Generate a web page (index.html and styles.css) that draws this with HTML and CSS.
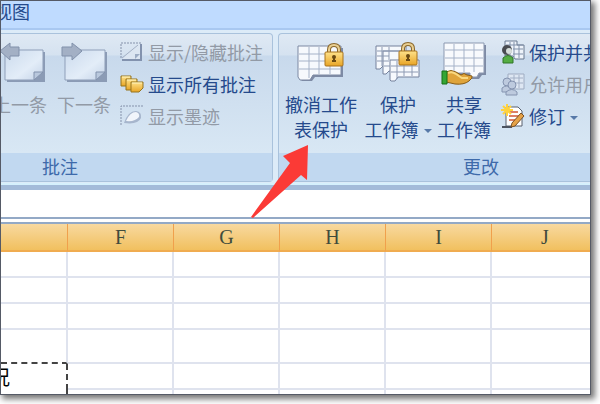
FILE: index.html
```html
<!DOCTYPE html>
<html lang="zh-CN">
<head>
  <meta charset="UTF-8">
  <meta name="viewport" content="width=device-width, initial-scale=1.0">
  <title>撤消工作表保护</title>
  <link rel="stylesheet" href="styles.css">
</head>
<body>
  <!-- shared icon parts -->
  <svg class="defs" aria-hidden="true">
    <defs>
      <linearGradient id="note" x1="0" y1="0" x2="1" y2="1">
        <stop offset="0" stop-color="#cbdaed"/>
        <stop offset=".6" stop-color="#e3edf8"/>
        <stop offset="1" stop-color="#c3d2e7"/>
      </linearGradient>
      <linearGradient id="gold" x1="0" y1="0" x2="0" y2="1">
        <stop offset="0" stop-color="#ffe28a"/>
        <stop offset="1" stop-color="#e8a526"/>
      </linearGradient>
      <g id="lock">
        <path d="M4 10V6Q4 1 9 1T14 6V10" fill="none" stroke="#8a682c" stroke-width="4"/>
        <path d="M4 10V6Q4 1 9 1T14 6V10" fill="none" stroke="#e9cf91" stroke-width="2"/>
        <rect x="0" y="8" width="18" height="14" rx="1" fill="url(#gold)" stroke="#a8721c"/>
        <circle cx="9" cy="13" r="2" fill="#6b4a12"/>
        <path d="M9 13V18M7 17H11" stroke="#6b4a12" stroke-width="2"/>
      </g>
    </defs>
  </svg>

  <div class="window">
    <nav class="tabs"><a class="tab" href="#view"><span>视图</span></a></nav>

    <div class="ribbon">
      <section class="group comments">
        <div class="tools">
          <button class="big prev" disabled>
            <svg width="48" height="40" viewBox="0 0 48 40">
              <path d="M8 10H46V40H8Z" fill="#8b9bb5"/>
              <path d="M6 8H44V30L35 38H6Z" fill="url(#note)" stroke="#8f9fb9"/>
              <path d="M35 38V30H44Z" fill="#b9c8dd" stroke="#8292ad"/>
              <path d="M1 9L11 1V5H20V14H11V18Z" fill="#a3b0c5" stroke="#8191ab"/>
            </svg>
            <span>上一条</span>
          </button>
          <button class="big next" disabled>
            <svg width="54" height="40" viewBox="0 0 54 40">
              <path d="M10 10H50V40H10Z" fill="#8b9bb5"/>
              <path d="M8 8H48V30L39 38H8Z" fill="url(#note)" stroke="#8f9fb9"/>
              <path d="M39 38V30H48Z" fill="#b9c8dd" stroke="#8292ad"/>
              <path d="M25 9L15 1V5H5V14H15V18Z" fill="#a3b0c5" stroke="#8191ab"/>
            </svg>
            <span>下一条</span>
          </button>
          <div class="stack">
            <button class="small" disabled>
              <svg width="24" height="22" viewBox="0 0 24 22">
                <path d="M1 17V2H22" fill="none" stroke="#8592ab" stroke-dasharray="2 1"/>
                <path d="M2 18L20 3V18Z" fill="#dce6f2"/>
                <path d="M2 17L18 4" stroke="#a5b1c5"/>
                <path d="M2 19H21V3" fill="none" stroke="#8292ae" stroke-width="2"/>
                <path d="M15 18V13H20Z" fill="#9dadc5"/>
              </svg>
              <span>显示/隐藏批注</span>
            </button>
            <button class="small">
              <svg width="24" height="22" viewBox="0 0 24 22">
                <g fill="url(#gold)" stroke="#96751f">
                  <path d="M1 3H11V11L9 13H1Z"/>
                  <path d="M6 6H17V14L14 17H6Z"/>
                  <path d="M11 9H23V15L19 19H11Z"/>
                </g>
                <path d="M2 4H10M7 7H16M12 10H22" stroke="#fff3bd"/>
              </svg>
              <span>显示所有批注</span>
            </button>
            <button class="small" disabled>
              <svg width="24" height="22" viewBox="0 0 24 22">
                <path d="M23 1H1V21" fill="none" stroke="#8592ab" stroke-dasharray="2 1"/>
                <path d="M4 18Q8 6 16 6Q22 7 21 13Q18 20 4 18Z" fill="#a7b6cd"/>
                <path d="M6 16Q10 7 16 7Q20 8 19 12Q15 17 6 16Z" fill="#f1f5fb"/>
              </svg>
              <span>显示墨迹</span>
            </button>
          </div>
        </div>
        <h2 class="caption">批注</h2>
      </section>

      <section class="group changes">
        <div class="tools">
          <button class="big unprotect">
            <svg width="48" height="40" viewBox="0 0 48 40">
              <path d="M3 6H46V35H18L15 39H5L3 37Z" fill="#7e8ba5"/>
              <path d="M1 4H44V33H16L13 38H3L1 35Z" fill="#f6f9fd" stroke="#7c89a3"/>
              <path d="M2 12H43M2 19H43M2 27H43M12 5V36M22 5V32M33 5V32" stroke="#a5b2c8"/>
              <use href="#lock" x="28" y="2"/>
            </svg>
            <span>撤消工作<br>表保护</span>
          </button>
          <button class="big book">
            <svg width="48" height="40" viewBox="0 0 48 40">
              <g fill="#f6f9fd" stroke="#74819c">
                <path d="M2 4H32V24H9L6 27H2Z"/>
                <path d="M9 9H37V29H15L12 32H9Z"/>
                <path d="M16 18H45V35H24L21 39H17L16 38Z"/>
              </g>
              <path d="M3 9H31M3 14H15M3 19H15M8 5V24M15 5V18M10 24H16M17 24H44M17 30H44M23 19V37M30 19V34M38 19V34" stroke="#8d9ab3"/>
              <use href="#lock" x="25" y="1"/>
            </svg>
            <span>保护<br>工作簿<i class="arrow"></i></span>
          </button>
          <button class="big share">
            <svg width="48" height="44" viewBox="0 0 48 44">
              <path d="M6 3H46V33H42L39 37H31V33H6Z" fill="#7e8ba5"/>
              <path d="M4 1H44V31H39L37 35H30V31H4Z" fill="#f8fafd" stroke="#8b98b0"/>
              <path d="M5 8H43M5 16H43M5 24H43M14 2V30M24 2V30M34 2V30" stroke="#a5b2c8"/>
              <path d="M6 30Q11 27 16 30L21 33Q24 30 27 33L32 34Q33 36 29 39Q24 43 15 42L6 40Z" fill="#dfa43b" stroke="#875c18"/>
              <path d="M8 31Q12 29 16 32L22 36H28" fill="none" stroke="#f9d982" stroke-width="2"/>
              <path d="M2 29H7V42H2Z" fill="#35a635" stroke="#167017"/>
            </svg>
            <span>共享<br>工作簿</span>
          </button>
          <div class="stack">
            <button class="small">
              <svg width="24" height="24" viewBox="0 0 24 24">
                <path d="M4 1H16V5H23V19H14L12 16H4Z" fill="#eef3fa" stroke="#69788f"/>
                <path d="M5 5H22M12 9H22M12 14H22M9 2V16M13 2V17M18 5V18" stroke="#8191aa"/>
                <circle cx="6" cy="10" r="5" fill="#494b50"/>
                <circle cx="8" cy="11" r="3" fill="#d6ddda"/>
                <path d="M2 23V18Q7 13 12 18V23Z" fill="#55ad43" stroke="#2f7427"/>
              </svg>
              <span>保护并共享工作簿</span>
            </button>
            <button class="small" disabled>
              <svg width="24" height="24" viewBox="0 0 24 24">
                <path d="M7 2H23V17H11V9H7Z" fill="#dee7f3" stroke="#9eabc1"/>
                <path d="M9 6H22M12 11H22M13 3V16M18 3V16" stroke="#a3b0c6"/>
                <g fill="#bdcade" stroke="#8594b0">
                  <circle cx="6" cy="10" r="4"/>
                  <path d="M1 20V16Q6 12 10 16V20Z"/>
                  <circle cx="11" cy="13" r="4"/>
                  <path d="M5 23V20Q11 15 16 20V23Z"/>
                </g>
              </svg>
              <span>允许用户编辑区域</span>
            </button>
            <button class="small">
              <svg width="24" height="24" viewBox="0 0 24 24">
                <path d="M5 3H17L21 7V22H5Z" fill="#fff" stroke="#59616f"/>
                <path d="M8 8H17M8 12H18M8 16H14" stroke="#dc8066" stroke-width="2"/>
                <path d="M1 23H11" stroke="#4c535f" stroke-width="2"/>
                <path d="M11 19L20 9L23 12L14 22L10 23Z" fill="#e6a247" stroke="#7b5123"/>
                <path d="M6 0V12M0 6H12M2 2L10 10M10 2L2 10" stroke="#ffd23e" stroke-width="2"/>
              </svg>
              <span>修订<i class="arrow"></i></span>
            </button>
          </div>
        </div>
        <h2 class="caption">更改</h2>
      </section>
    </div>

    <input class="formula" type="text" aria-label="编辑栏">

    <table class="sheet">
      <colgroup><col class="first"><col><col><col><col><col class="last"></colgroup>
      <thead>
        <tr><th></th><th>F</th><th>G</th><th>H</th><th>I</th><th>J</th></tr>
      </thead>
      <tbody>
        <tr><td></td><td></td><td></td><td></td><td></td><td></td></tr>
        <tr><td></td><td></td><td></td><td></td><td></td><td></td></tr>
        <tr><td></td><td></td><td></td><td></td><td></td><td></td></tr>
        <tr class="tall"><td class="above"></td><td></td><td></td><td></td><td></td><td></td></tr>
        <tr><td class="copied"><div class="spill"><span>况</span></div></td><td></td><td></td><td></td><td></td><td></td></tr>
        <tr><td class="copied"></td><td></td><td></td><td></td><td></td><td></td></tr>
      </tbody>
    </table>

    <svg class="pointer" width="62" height="76" viewBox="0 0 62 76" aria-hidden="true">
      <path d="M58 2L33 13L40 20L1 74L3 75L51 32L57 37Z" fill="#fb3a36"/>
    </svg>
  </div>
</body>
</html>
```

FILE: styles.css
```css
* { box-sizing: border-box; }
body {
  margin: 0;
  height: 100vh;
  padding: 0 9px 9px 0;
  display: flex;
  background: #fff;
  font-family: "Noto Sans CJK SC", sans-serif;
  font-size: 18px;
}
.defs { position: absolute; width: 0; height: 0; }
.window {
  position: relative;
  flex: 1;
  min-width: 0;
  overflow: hidden;
  border: 1px solid #555a66;
  background: #fff;
  box-shadow: 3px 3px 6px 1px #777;
}

/* tab strip */
.tabs {
  height: 29px;
  background: #bfdbff;
  border-bottom: 2px solid #a9c8f1;
}
.tab {
  display: flex;
  justify-content: flex-end;
  width: 29px;
  overflow: hidden;
  white-space: nowrap;
  color: #254a8c;
  line-height: 20px;
  text-decoration: none;
}

/* ribbon */
.ribbon {
  display: flex;
  gap: 5px;
  padding: 3px 0;
  background: #dcebf8;
  border-bottom: 5px solid #a3bbd9;
  box-shadow: inset 0 -2px #d5f0fc;
}
.group {
  height: 149px;
  display: flex;
  flex-direction: column;
  border: 1px solid #a9c2dc;
  background: linear-gradient(#dfe9f4 0, #d5e2f0 21px, #c8d9ec 22px, #d8e7f4 118px);
}
.comments {
  width: 272px;
  flex: none;
  border-left: 0;
  border-radius: 0 4px 4px 0;
}
.changes {
  flex: 1;
  min-width: 0;
  border-right: 0;
  border-radius: 4px 0 0 4px;
  overflow: hidden;
}
.tools {
  flex: 1;
  display: flex;
  align-items: flex-start;
}
.caption {
  margin: 0;
  height: 28px;
  background: #c1d8f0;
  color: #3e6aaa;
  font-size: 18px;
  font-weight: normal;
  line-height: 27px;
}
.comments .caption { padding-left: 41px; }
.changes .caption { padding-left: 184px; }

button {
  border: 0;
  padding: 0;
  background: none;
  color: #254a8c;
  font: inherit;
  white-space: nowrap;
}
button:disabled { color: #929aa6; }
.big {
  flex: none;
  display: flex;
  flex-direction: column;
  align-items: center;
  padding-top: 8px;
  line-height: 25px;
}
.big svg { margin-bottom: 10px; }
.big.share svg { margin-bottom: 6px; }
.prev { width: 46px; align-items: flex-end; overflow: hidden; }
.next { width: 54px; margin: 0 9px 0 10px; }
.unprotect { width: 74px; margin-left: 5px; }
.book { width: 70px; margin-left: 5px; }
.share { width: 60px; margin-left: 1px; }
.stack { display: flex; flex-direction: column; padding-top: 2px; }
.small {
  display: flex;
  align-items: center;
  gap: 4px;
  height: 32px;
}
.changes .stack { margin-left: 7px; }
.arrow {
  display: inline-block;
  margin-left: 5px;
  border: 4px solid transparent;
  border-top-color: #5779a8;
  border-bottom: 0;
  vertical-align: 4px;
}

/* formula bar */
.formula {
  display: block;
  width: 100%;
  height: 27px;
  border: 0;
  padding: 0 4px;
  background: #fff;
  font: inherit;
}

/* sheet */
.sheet {
  width: 100%;
  table-layout: fixed;
  border-collapse: separate;
  border-spacing: 0;
  border-top: 7px double #93a9c6;
}
.first { width: 67px; }
.last { width: 98px; }
th {
  height: 28px;
  padding: 0;
  background: linear-gradient(#f8d9a0, #f1c05f);
  border-right: 1px solid #f0a04c;
  border-bottom: 2px solid #f0ac50;
  color: #404b3c;
  font: 20px/24px "Liberation Serif", serif;
}
td {
  height: 26px;
  padding: 0;
  border-right: 2px solid #dfe3ee;
  border-bottom: 2px solid #dfe3ee;
}
.tall td { height: 34px; }
th:last-child, td:last-child { border-right: 0; }
th:last-child { padding-left: 8px; }
.tall .above { border-bottom: 2px dashed #444; }
.copied { border-right: 2px dashed #444; border-bottom: 0; }
.spill {
  display: flex;
  justify-content: flex-end;
  width: 9px;
  overflow: hidden;
  font-size: 20px;
  line-height: 24px;
}

/* red arrow laid over the ribbon */
.pointer { position: absolute; left: 249px; top: 142px; }
```
